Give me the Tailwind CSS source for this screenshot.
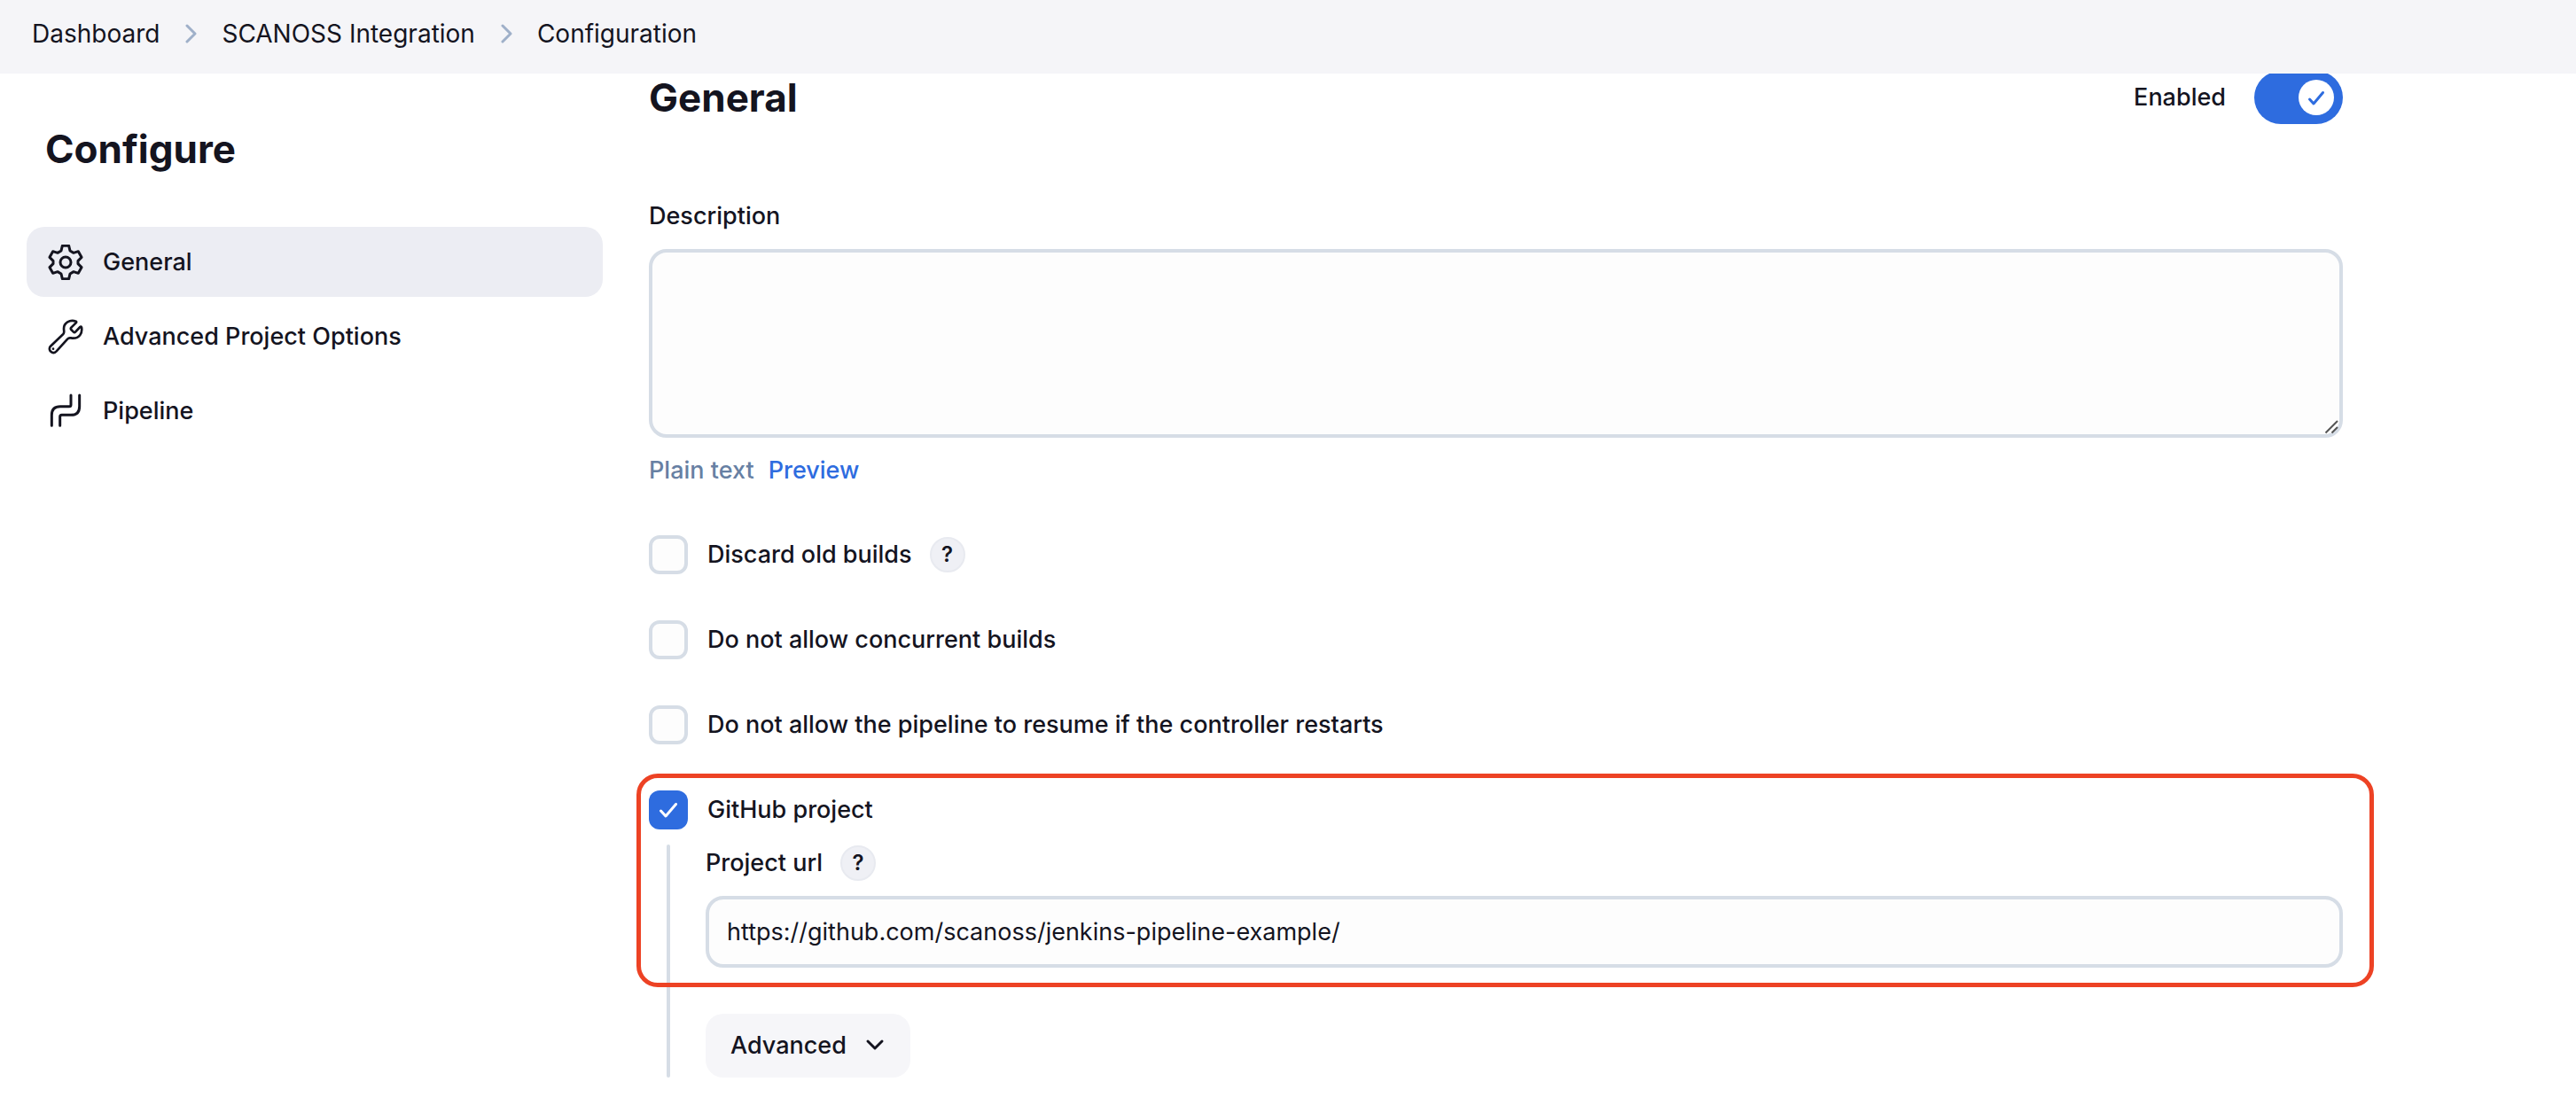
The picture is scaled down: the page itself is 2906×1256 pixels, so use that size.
<!DOCTYPE html>
<html lang="en">
<head>
<meta charset="utf-8">
<meta name="viewport" content="width=device-width, initial-scale=1">
<title>Configure - SCANOSS Integration</title>
<script src="https://cdn.jsdelivr.net/npm/@tailwindcss/browser@4"></script>
</head>
<body class="bg-white font-['Inter',sans-serif] text-[27px] leading-[34px] font-medium text-[#14141f]">

<header class="sticky top-0 z-10 bg-[#f5f5f8] px-9 pt-[21px] pb-7 text-[28px] leading-[34px] font-normal">
  <nav aria-label="Breadcrumb">
    <ol class="flex items-center gap-7">
      <li><a href="#">Dashboard</a></li>
      <li aria-hidden="true"><svg class="h-[22px] w-[14px] fill-none stroke-[#9fb0c9] stroke-3" viewBox="0 0 14 22" stroke-linecap="round" stroke-linejoin="round"><path d="M3 2l9 9-9 9"/></svg></li>
      <li><a href="#">SCANOSS Integration</a></li>
      <li aria-hidden="true"><svg class="h-[22px] w-[14px] fill-none stroke-[#9fb0c9] stroke-3" viewBox="0 0 14 22" stroke-linecap="round" stroke-linejoin="round"><path d="M3 2l9 9-9 9"/></svg></li>
      <li><a href="#">Configuration</a></li>
    </ol>
  </nav>
</header>

<div class="flex gap-[52px] pl-[30px] pr-10">
  <aside class="w-[650px] shrink-0 pt-[57px]">
    <h1 class="px-[21px] text-[44px] leading-[56px] font-bold">Configure</h1>
    <nav class="mt-[60px] flex flex-col gap-[5px]" aria-label="Sections">
      <a href="#general" class="flex h-[79px] items-center gap-[22px] rounded-[20px] bg-[#ecedf3] px-6">
        <svg class="size-10 fill-none stroke-current stroke-[9]" viewBox="30 30 120 120" stroke-linecap="round" stroke-linejoin="round"><path d="M79 34h22l4 17 12 7 16-5 11 20-12 12v10l12 12-11 20-16-5-12 7-4 17h-22l-4-17-12-7-16 5-11-20 12-12v-10l-12-12 11-20 16 5 12-7z"/><circle cx="90" cy="90" r="18"/></svg>
        General
      </a>
      <a href="#advanced" class="flex h-[79px] items-center gap-[22px] rounded-[20px] px-6">
        <svg class="size-10 fill-none stroke-current stroke-[8]" viewBox="30 28 120 120" stroke-linecap="round" stroke-linejoin="round"><path d="M125 36C104 28 84 42 84 60C84 70 87 74 82 79L39 120C28 133 46 150 59 137L97 95C102 89 106 93 116 93C135 93 148 78 144 56C143 53 141 53 139 55L123 72Q120 75 116 71L109 64Q106 61 109 57L125 41Q128 38 125 36Z"/><circle cx="48" cy="129" r="4" class="fill-current stroke-none"/></svg>
        Advanced Project Options
      </a>
      <a href="#pipeline" class="flex h-[79px] items-center gap-[22px] rounded-[20px] px-6">
        <svg class="size-10 fill-none stroke-current stroke-[9]" viewBox="30 25 120 120" stroke-linecap="round" stroke-linejoin="round"><path d="M108 31V63Q108 69 102 69H72Q43 69 43 98V134M137 31V69Q137 98 108 98H77Q71 98 71 104V134"/></svg>
        Pipeline
      </a>
    </nav>
  </aside>

  <main id="general" class="-mt-[3px] max-w-[1911px] min-w-0 flex-1 pb-10">
    <div class="flex h-[60px] items-center justify-between">
      <h2 class="text-[44px] leading-[56px] font-bold">General</h2>
      <label class="flex items-center gap-8">
        Enabled
        <span class="relative block h-[60px] w-[100px]">
          <input type="checkbox" checked class="block h-full w-full appearance-none rounded-full bg-[#2e6cdf]">
          <svg class="pointer-events-none absolute top-[10px] right-[10px] size-10 rounded-full bg-white fill-none stroke-[#2e6cdf] stroke-3" viewBox="0 0 40 40" stroke-linecap="round" stroke-linejoin="round"><path d="M12.500 22l4.500 5L27.500 14.500"/></svg>
        </span>
      </label>
    </div>

    <label for="description" class="mt-[87px] block">Description</label>
    <div class="relative mt-5">
      <textarea id="description" class="block h-[213px] w-full resize-none rounded-[20px] border-4 border-[#d6dde6] bg-[#fdfdfd] p-5"></textarea>
      <svg class="pointer-events-none absolute right-[5px] bottom-[4px] size-4 fill-none stroke-[#555] stroke-2" viewBox="0 0 16 16"><path d="M1.500 14.500L15 1M8.500 14.500L15 8"/></svg>
    </div>
    <p class="mt-5 flex gap-4"><span class="text-[#6780a3]">Plain text</span><a href="#" class="text-[#2e6cdf]">Preview</a></p>

    <div class="mt-14 flex flex-col gap-[52px]">
      <div class="flex h-11 items-center gap-5">
        <label class="flex items-center gap-[22px]"><input type="checkbox" class="size-11 appearance-none rounded-xl border-4 border-[#d6dde6] bg-[#fdfdfd]">Discard old builds</label>
        <button type="button" aria-label="Help for discard old builds" class="size-10 rounded-full border-2 border-[#e8eaf0] bg-[#eff0f5] text-[24px] leading-[34px] font-semibold">?</button>
      </div>
      <label class="flex h-11 items-center gap-[22px]"><input type="checkbox" class="size-11 appearance-none rounded-xl border-4 border-[#d6dde6] bg-[#fdfdfd]">Do not allow concurrent builds</label>
      <label class="flex h-11 items-center gap-[22px]"><input type="checkbox" class="size-11 appearance-none rounded-xl border-4 border-[#d6dde6] bg-[#fdfdfd]">Do not allow the pipeline to resume if the controller restarts</label>

      <section class="relative">
        <label class="flex h-11 items-center gap-[22px]">
          <span class="relative block size-11">
            <input type="checkbox" checked class="block size-11 appearance-none rounded-xl bg-[#2e6cdf]">
            <svg class="pointer-events-none absolute inset-0 size-11 fill-none stroke-white stroke-3" viewBox="0 0 44 44" stroke-linecap="round" stroke-linejoin="round"><path d="M13.500 23l5.500 6L30.500 15.500"/></svg>
          </span>
          GitHub project
        </label>
        <div class="mt-[17px] ml-5 flex gap-10">
          <div class="w-1 shrink-0 rounded-full bg-[#d6dde6]"></div>
          <div class="min-w-0 flex-1">
            <div class="flex h-[42px] items-center gap-5">
              <label for="project-url">Project url</label>
              <button type="button" aria-label="Help for project url" class="size-10 rounded-full border-2 border-[#e8eaf0] bg-[#eff0f5] text-[24px] leading-[34px] font-semibold">?</button>
            </div>
            <input id="project-url" type="text" value="https://github.com/scanoss/jenkins-pipeline-example/" class="mt-4 block h-[81px] w-full rounded-[20px] border-4 border-[#d6dde6] bg-[#fdfdfd] px-5 font-normal">
            <button type="button" class="mt-[52px] flex h-[72px] items-center gap-5 rounded-[20px] bg-[#f6f6f9] px-7">
              Advanced
              <svg class="size-6 fill-none stroke-current stroke-3" viewBox="0 0 24 24" stroke-linecap="round" stroke-linejoin="round"><path d="M4 7l8 8 8-8"/></svg>
            </button>
          </div>
        </div>
        <div class="pointer-events-none absolute -top-[19px] -right-[35px] -left-[14px] h-[241px] rounded-[24px] border-5 border-[#ed4224]"></div>
      </section>
    </div>
  </main>
</div>
</body>
</html>
